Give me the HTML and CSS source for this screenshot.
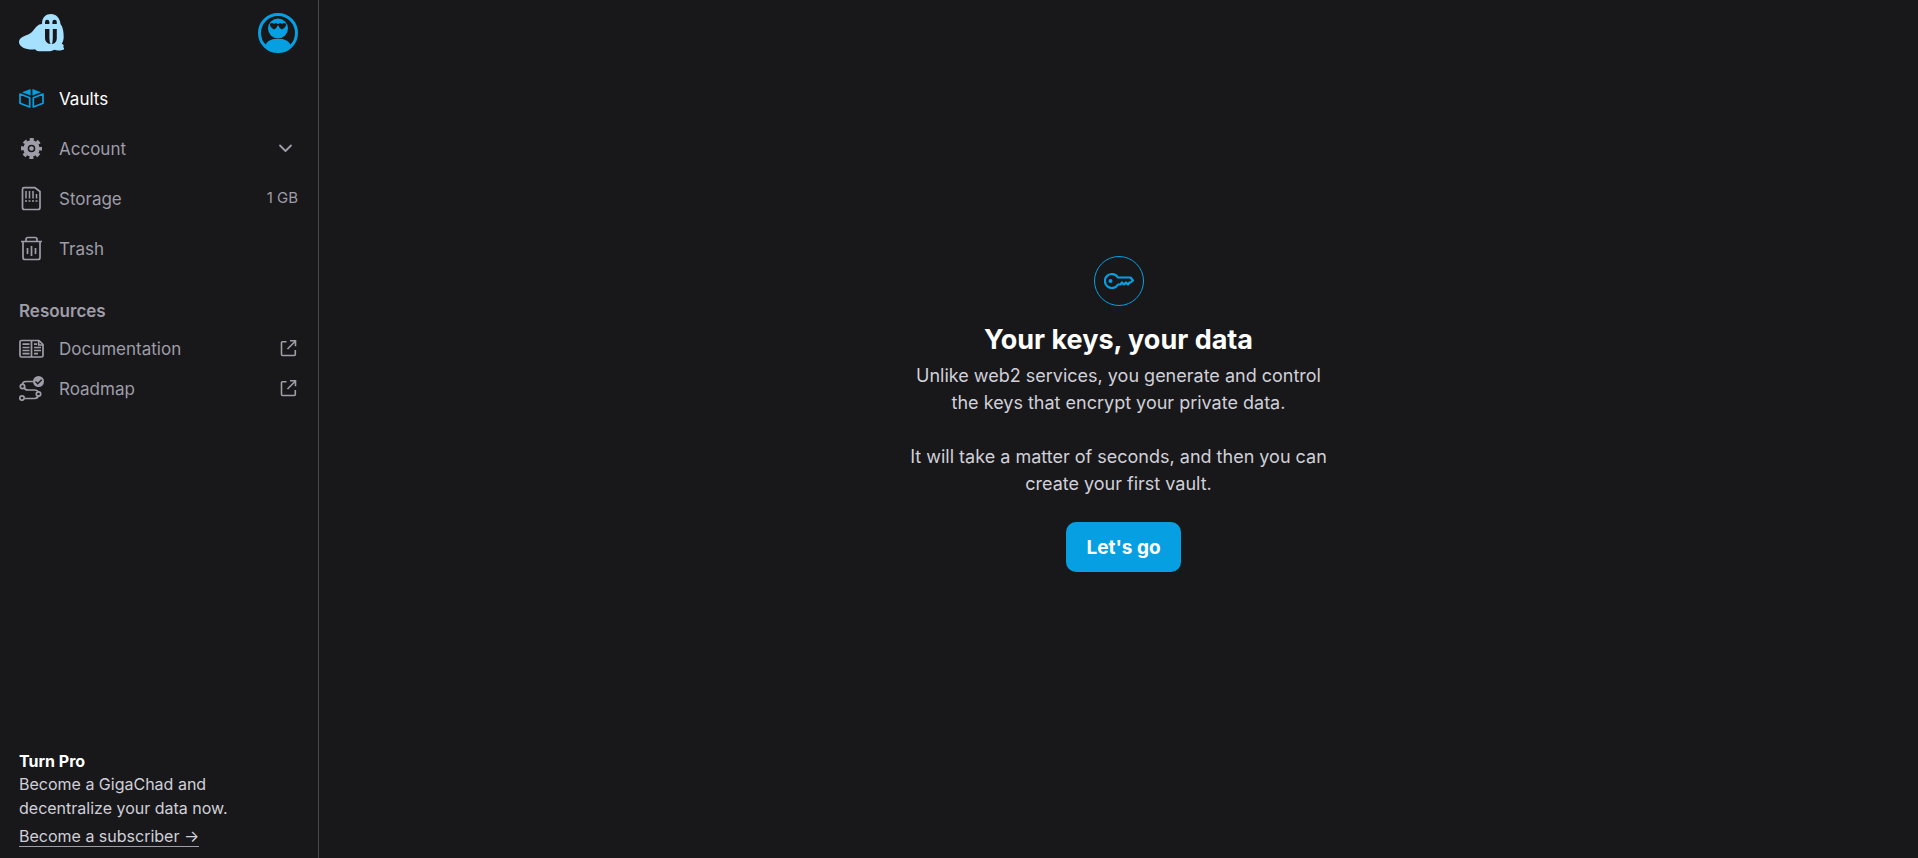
FILE: index.html
```html
<!DOCTYPE html>
<html lang="en">
<head>
    <meta charset="UTF-8">
    <meta name="viewport" content="width=device-width, initial-scale=1.0">
    <title>Vaults</title>
    <link rel="stylesheet" href="styles.css">
</head>
<body>

    <aside class="sidebar">
        <div class="sidebar-header">
            <a href="#" class="logo" aria-label="Home">
                <svg width="46" height="40" viewBox="0 0 46 40">
                    <path fill="#a5e1ff" d="M23 11C23 4 27 1 32 1s9 4 9.500 10c2.500 3 3.200 8 3.200 13 0 3-1 5-2 7 2 0 2.500 2 1.500 3 1.500 1 1 3-1 3-3 1-6 .5-8-.3-2 1.300-4 1.600-6 1.600H20c-2 0-3-1-4-2C10 37.500 0 35 0 29c0-6 9-6 13-10 4-5 6-8 10-8z"/>
                    <path fill="#18181a" d="M26 11V9a2.200 2.200 0 0 1 4.400 0v2zM33.400 11V9a2.200 2.200 0 0 1 4.400 0v2zM26 16h4.400v9q0 4 1.200 6c-3.500-.2-5.600-3-5.600-6zM37.800 16h-4v9q0 4-1 6c3.500-.2 5-3 5-6z"/>
                </svg>
            </a>
            <a href="#" class="avatar" aria-label="Profile">
                <svg width="40" height="40" viewBox="0 0 40 40">
                    <circle cx="20" cy="20" r="18.500" fill="none" stroke="#06a0e2" stroke-width="3"/>
                    <circle cx="20" cy="15.500" r="10" fill="#06a0e2"/>
                    <path fill="#06a0e2" d="M7 33c2-5 6-7 10-7h6c4 0 8 2 10 7a18 18 0 0 1-26 0z"/>
                    <path fill="#18181a" d="M12 11c1-1.500 3-1.500 4 0 1-1.500 3-1.500 3.500 0h1c.5-1.500 2.500-1.500 3.500 0 1-1.500 3-1.500 4 0 .5 2-1.500 4-4 5.500-2-1-3.200-2.500-3.500-4h-1c-.3 1.500-1.500 3-3.500 4-2.500-1.500-4.500-3.500-4-5.500z"/>
                </svg>
            </a>
        </div>

        <nav class="menu">
            <a href="#" class="menu-item active">
                <svg class="icon" viewBox="0 0 25 25">
                    <path fill="#06a0e2" d="M11.600 3v6.500L3 6.300zM13.400 3v6.500L22 6.300z"/>
                    <path fill="none" stroke="#06a0e2" stroke-width="1.700" stroke-linejoin="round" d="M10.700 11.800v9.200L1 17.200V8zM14.300 11.800v9.200L24 17.200V8z"/>
                </svg>
                <span>Vaults</span>
            </a>
            <button type="button" class="menu-item" aria-expanded="false">
                <svg class="icon" viewBox="0 0 25 25">
                    <circle cx="12.500" cy="12.500" r="5.700" fill="none" stroke="currentColor" stroke-width="5"/>
                    <circle cx="12.500" cy="12.500" r="9" fill="none" stroke="currentColor" stroke-width="3" stroke-dasharray="4 3.070" stroke-dashoffset="2"/>
                    <circle cx="12.500" cy="12.500" r="3.800" fill="#18181a"/>
                    <circle cx="12.500" cy="12.500" r="2.300" fill="currentColor"/>
                </svg>
                <span>Account</span>
                <svg class="chevron" viewBox="0 0 25 25">
                    <path fill="none" stroke="currentColor" stroke-width="1.800" stroke-linecap="round" stroke-linejoin="round" d="M7 9.500l5.500 5.500 5.500-5.500"/>
                </svg>
            </button>
            <a href="#" class="menu-item">
                <svg class="icon" viewBox="0 0 25 25">
                    <path fill="none" stroke="currentColor" stroke-width="1.700" stroke-linejoin="round" d="M5 1.700h11l5 3.800V21.500a2 2 0 0 1-2 2H5.500a2 2 0 0 1-2-2V3.200a1.500 1.500 0 0 1 1.500-1.500z"/>
                    <path fill="none" stroke="currentColor" stroke-width="1.500" d="M7 5v7.500M10.500 5v7.500M14 5v7.500M17.500 8v4.500M6 15h2M9.500 15h2M13 15h2M16.500 15h2"/>
                </svg>
                <span>Storage</span>
                <span class="usage">1 GB</span>
            </a>
            <a href="#" class="menu-item">
                <svg class="icon" viewBox="0 0 25 25">
                    <path fill="none" stroke="currentColor" stroke-width="1.700" stroke-linejoin="round" d="M2 5.500h21M4 5.500v16a2 2 0 0 0 2 2h13a2 2 0 0 0 2-2v-16M7 5.500V3.500a2 2 0 0 1 2-2h7a2 2 0 0 1 2 2v2"/>
                    <path fill="none" stroke="currentColor" stroke-width="1.700" d="M8.500 12v6M12.500 10v10M16.500 12v6"/>
                </svg>
                <span>Trash</span>
            </a>
        </nav>

        <nav class="resources">
            <h2>Resources</h2>
            <a href="#" class="menu-item">
                <svg class="icon" viewBox="0 0 25 25">
                    <path fill="none" stroke="currentColor" stroke-width="1.700" stroke-linejoin="round" d="M12.500 4.500v16M2.500 4.500h17.500l4 4V19.500a1.500 1.500 0 0 1-1.500 1.500H2.500a1.500 1.500 0 0 1-1.500-1.500V6a1.500 1.500 0 0 1 1.500-1.500z"/>
                    <path fill="none" stroke="currentColor" stroke-width="1.700" d="M3.500 8.200h7M3.500 11.500h7M3.500 14.500h7M3.500 17.700h7M15 8.200h3M15 11.500h7M15 14.500h7M15 17.700h4M19.700 5v4h4"/>
                </svg>
                <span>Documentation</span>
                <svg class="external" viewBox="0 0 20 20">
                    <path fill="none" stroke="currentColor" stroke-width="1.600" d="M8.500 3.700H4.500a1 1 0 0 0-1 1v11.800a1 1 0 0 0 1 1h11.800a1 1 0 0 0 1-1V12M9.500 11L17 3.500M12 2.800h5.500v5.500"/>
                </svg>
            </a>
            <a href="#" class="menu-item">
                <svg class="icon" viewBox="0 0 25 25">
                    <path fill="none" stroke="currentColor" stroke-width="1.700" d="M14 5.500H7q-3.500 0-3.500 3M5.500 11.500q0 2.500 3.500 2.500h6.500q3 0 3.500 2M19 19.500q0 3-3.500 3H6"/>
                    <circle cx="3.500" cy="10.500" r="2.200" fill="none" stroke="currentColor" stroke-width="1.700"/>
                    <circle cx="19.500" cy="18" r="2.200" fill="none" stroke="currentColor" stroke-width="1.700"/>
                    <circle cx="3" cy="22" r="2.200" fill="none" stroke="currentColor" stroke-width="1.700"/>
                    <circle cx="19.500" cy="5.500" r="5.500" fill="currentColor"/>
                    <path fill="none" stroke="#18181a" stroke-width="1.500" d="M16.500 5.500l2.200 2.200 4-4"/>
                </svg>
                <span>Roadmap</span>
                <svg class="external" viewBox="0 0 20 20">
                    <path fill="none" stroke="currentColor" stroke-width="1.600" d="M8.500 3.700H4.500a1 1 0 0 0-1 1v11.800a1 1 0 0 0 1 1h11.800a1 1 0 0 0 1-1V12M9.500 11L17 3.500M12 2.800h5.500v5.500"/>
                </svg>
            </a>
        </nav>

        <div class="turn-pro">
            <h3>Turn Pro</h3>
            <p>Become a GigaChad and decentralize your data now.</p>
            <a href="#">Become a subscriber →</a>
        </div>
    </aside>

    <main class="content">
        <div class="setup">
            <div class="key-badge">
                <svg width="30" height="18" viewBox="0 0 30 18">
                    <path fill="none" stroke="#06a0e2" stroke-width="2.200" stroke-linejoin="round" d="M14 5.500a7 7 0 1 0 0 7H16.500l1.500-2 2 2 2-2 2 2 1.500-2h1L29 8.500 26.500 5.500z"/>
                    <circle cx="6.500" cy="9" r="2" fill="#06a0e2"/>
                </svg>
            </div>
            <h1>Your keys, your data</h1>
            <p>Unlike web2 services, you generate and control the keys that encrypt your private data.</p>
            <p>It will take a matter of seconds, and then you can create your first vault.</p>
            <button type="button" class="primary-button">Let's go</button>
        </div>
    </main>

</body>
</html>
```

FILE: styles.css
```css
* {
    box-sizing: border-box;
}

body {
    display: flex;
    min-height: 100vh;
    margin: 0;
    background-color: #18181a;
    color: #d1d0d9;
    font-family: Inter, "Liberation Sans", sans-serif;
    font-size: 18px;
}

h1, h2, h3, p {
    margin: 0;
}

a {
    color: inherit;
    text-decoration: none;
}

svg {
    display: block;
    flex-shrink: 0;
}

/* Sidebar */
.sidebar {
    display: flex;
    flex-direction: column;
    flex-shrink: 0;
    width: 319px;
    padding: 13px 20px 10px 19px;
    border-right: 1px solid #49484f;
}

.sidebar-header {
    display: flex;
    justify-content: space-between;
    margin-bottom: 21px;
}

.menu-item {
    display: flex;
    align-items: center;
    gap: 15px;
    width: 100%;
    height: 50px;
    padding: 0;
    border: none;
    background: none;
    color: #9f9da8;
    font-family: inherit;
    font-size: 17px;
    cursor: pointer;
}

.menu-item.active {
    color: white;
}

.menu-item svg {
    margin-bottom: 2px;
}

.icon {
    width: 25px;
    height: 25px;
}

.chevron {
    width: 25px;
    height: 25px;
    margin-left: auto;
}

.external {
    width: 20px;
    height: 20px;
    margin-left: auto;
}

.usage {
    margin-left: auto;
    margin-bottom: 4px;
    font-size: 15px;
}

.resources {
    margin-top: 25px;
}

.resources h2 {
    color: #9f9da8;
    font-size: 17px;
    font-weight: 600;
    line-height: 24px;
    margin-bottom: 6px;
}

.resources .menu-item {
    height: 40px;
}

.turn-pro {
    margin-top: auto;
    font-size: 16px;
    line-height: 24px;
}

.turn-pro h3 {
    color: white;
    font-size: 16px;
    font-weight: 700;
    line-height: 22px;
}

.turn-pro a {
    display: inline-block;
    margin-top: 6px;
    border-bottom: 1px solid #9f9da8;
    line-height: 20px;
}

/* Main area */
.content {
    display: flex;
    flex: 1;
    align-items: center;
    justify-content: center;
    padding-bottom: 30px;
}

.setup {
    display: flex;
    flex-direction: column;
    align-items: center;
    max-width: 430px;
    text-align: center;
}

.key-badge {
    display: flex;
    align-items: center;
    justify-content: center;
    width: 50px;
    height: 50px;
    margin-bottom: 16px;
    border: 1px solid #06a0e2;
    border-radius: 50%;
}

.setup h1 {
    color: white;
    font-size: 27px;
    font-weight: 700;
    line-height: 36px;
    margin-bottom: 4px;
}

.setup p {
    line-height: 27px;
}

.setup p + p {
    margin-top: 27px;
    margin-bottom: 25px;
}

.primary-button {
    height: 50px;
    margin-left: 10px;
    padding: 0 20px;
    border: none;
    border-radius: 10px;
    background-color: #06a0e2;
    color: white;
    font-family: inherit;
    font-size: 19px;
    font-weight: 700;
    cursor: pointer;
}

.primary-button:hover {
    background-color: #058cc6;
}
```
